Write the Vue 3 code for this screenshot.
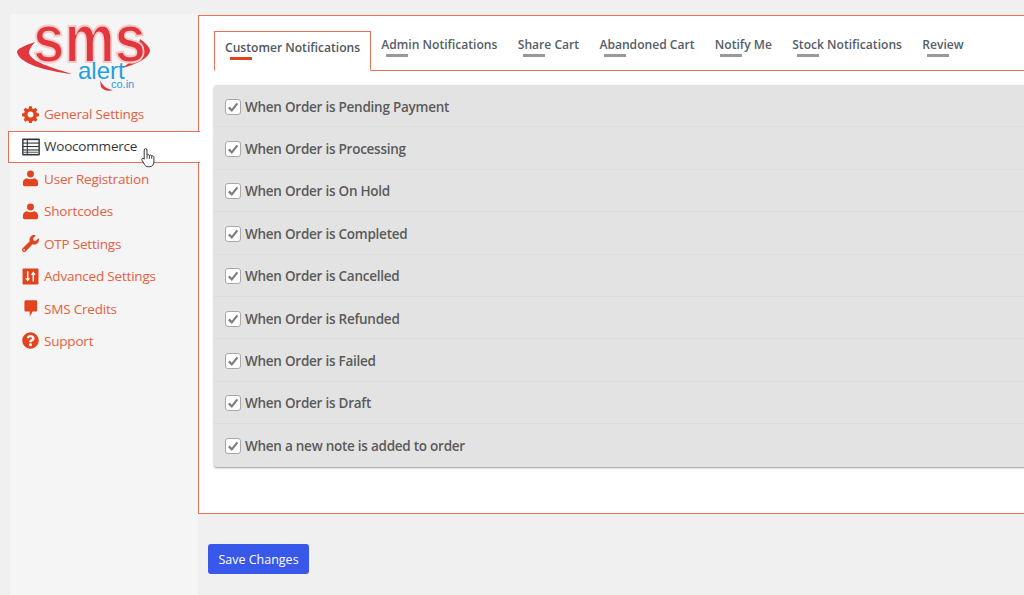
<template>
  <div class="page">
    <aside class="sidebar">
      <div class="logo">
        <svg width="160" height="76" viewBox="0 0 160 76">
          <path d="M18 24C6 28 0 31 0 34c2 12 30 19 55 22-19-6-41-12-43-21 0-3 2-7 6-11z" fill="#e0383e" />
          <path d="M123 21c7 5 10 9 10 12-1 7-13 13-28 17 9-6 17-12 17-18 0-4 0-8 1-11z" fill="#e0383e" />
          <text x="16" y="44" textLength="113" lengthAdjust="spacingAndGlyphs" class="logo-sms">sms</text>
          <text x="61" y="61" class="logo-alert">alert</text>
          <text x="94" y="70" class="logo-co">co.in</text>
          <path d="M83 62c2 5 6 9 13 10-5 2-10 0-12-3z" fill="#e0383e" />
        </svg>
      </div>
      <nav class="menu">
        <a v-for="item in menu" :key="item.label" class="menu-item" :class="{ active: item.active }">
          <svg class="menu-icon" viewBox="0 0 512 512" v-html="item.icon"></svg>
          {{ item.label }}
          <svg v-if="item.active" class="hand" width="14" height="21" viewBox="0 0 14 21">
            <path d="M4.600 1.600c.9 0 1.400.6 1.400 1.400v5.200c.5-.8 2-.8 2.400.2.7-.7 2-.5 2.300.5 1-.4 2.200.1 2.200 1.400v4.600c0 2.700-1.600 4.800-4.300 4.800H7.300c-1.800 0-2.800-.7-3.700-2.100L1 13.300c-.9-1.500.8-2.700 1.900-1.500l.3.400V3c0-.8.500-1.400 1.400-1.400z" fill="#fff" stroke="#333" stroke-width="1" />
            <path d="M6 8.200v3.600M8.400 8.400v3.400M10.700 8.900v2.900" stroke="#333" stroke-width=".9" fill="none" />
          </svg>
        </a>
      </nav>
    </aside>

    <main class="main">
      <section class="panel">
        <div class="tabs">
          <a v-for="tab in tabs" :key="tab" class="tab" :class="{ current: tab === 'Customer Notifications' }">
            {{ tab }}
            <span class="tab-bar"></span>
          </a>
        </div>
        <div class="rows">
          <label v-for="row in rows" :key="row" class="row">
            <span class="check">
              <svg width="12" height="12" viewBox="0 0 12 12">
                <path d="M1.800 6.400l3 3 5.600-7" fill="none" stroke="#7a7f84" stroke-width="2.200" />
              </svg>
            </span>
            {{ row }}
          </label>
        </div>
      </section>
      <button class="save">Save Changes</button>
    </main>
  </div>
</template>

<script setup>
const userIcon = '<g fill="#e2441f"><circle cx="256" cy="120" r="104"/><path d="M150 250c30 34 182 34 212 0 76 10 122 60 122 130v60c0 30-20 50-50 50H78c-30 0-50-20-50-50v-60c0-70 46-120 122-130z"/></g>'

const menu = [
  {
    label: 'General Settings',
    icon: '<path fill="#e2441f" d="M216 10h80l12 64 46 19 54-37 57 57-37 54 19 46 65 12v80l-65 12-19 46 37 54-57 57-54-37-46 19-12 65h-80l-12-65-46-19-54 37-57-57 37-54-19-46-65-12v-80l65-12 19-46-37-54 57-57 54 37 46-19z"/><circle cx="256" cy="256" r="88" fill="#f5f5f5"/>'
  },
  {
    label: 'Woocommerce',
    active: true,
    icon: '<rect x="4" y="16" width="504" height="480" rx="24" fill="#32373c"/><g fill="#fff"><rect x="44" y="62" width="424" height="66"/><rect x="44" y="160" width="424" height="66"/><rect x="44" y="258" width="424" height="66"/><rect x="44" y="356" width="424" height="96"/></g><g fill="#32373c"><rect x="136" y="62" width="30" height="390"/><rect x="44" y="392" width="424" height="24"/></g>'
  },
  { label: 'User Registration', icon: userIcon },
  { label: 'Shortcodes', icon: userIcon },
  {
    label: 'OTP Settings',
    icon: '<path fill="#e2441f" d="M507.730 109.100c-2.240-9.030-13.540-12.090-20.120-5.510l-74.360 74.360-67.880-11.310-11.310-67.880 74.360-74.360c6.620-6.620 3.430-17.900-5.660-20.160-47.380-11.740-99.550.91-136.580 37.930-39.640 39.640-50.550 97.100-34.050 147.200L18.740 402.760c-24.990 24.990-24.990 65.510 0 90.500 24.990 24.990 65.510 24.990 90.500 0l213.210-213.210c50.120 16.710 107.470 5.680 147.370-34.220 37.070-37.070 49.700-89.320 37.910-136.730zM64 472c-13.250 0-24-10.750-24-24 0-13.260 10.750-24 24-24s24 10.740 24 24c0 13.250-10.750 24-24 24z"/>'
  },
  {
    label: 'Advanced Settings',
    icon: '<rect x="16" y="16" width="480" height="480" rx="30" fill="#e2441f"/><path d="M150 100h44v210h50l-72 100-72-100h50zM318 410h44V200h50l-72-100-72 100h50z" fill="#fff"/>'
  },
  {
    label: 'SMS Credits',
    icon: '<path fill="#e2441f" d="M70 10h372c34 0 54 18 54 50v240c0 32-20 50-54 50H330L216 500V350H70c-34 0-54-18-54-50V60c0-32 20-50 54-50z" transform="translate(60 0) scale(.8 1)"/>'
  },
  {
    label: 'Support',
    icon: '<path fill="#e2441f" d="M504 256c0 136.997-111.043 248-248 248S8 392.997 8 256C8 119.083 119.043 8 256 8s248 111.083 248 248zM262.655 90c-54.497 0-89.255 22.957-116.549 63.758-3.536 5.286-2.353 12.415 2.715 16.258l34.699 26.310c5.205 3.947 12.621 3.008 16.665-2.122 17.864-22.658 30.113-35.797 57.303-35.797 20.429 0 45.698 13.148 45.698 32.958 0 14.976-12.363 22.667-32.534 33.976C247.128 238.528 216 254.941 216 296v4c0 6.627 5.373 12 12 12h56c6.627 0 12-5.373 12-12v-1.333c0-28.462 83.186-29.647 83.186-106.667 0-58.002-60.165-102-116.531-102zM256 338c-25.365 0-46 20.635-46 46 0 25.364 20.635 46 46 46s46-20.636 46-46c0-25.365-20.635-46-46-46z"/>'
  }
]

const tabs = [
  'Customer Notifications',
  'Admin Notifications',
  'Share Cart',
  'Abandoned Cart',
  'Notify Me',
  'Stock Notifications',
  'Review'
]

const rows = [
  'When Order is Pending Payment',
  'When Order is Processing',
  'When Order is On Hold',
  'When Order is Completed',
  'When Order is Cancelled',
  'When Order is Refunded',
  'When Order is Failed',
  'When Order is Draft',
  'When a new note is added to order'
]
</script>

<style>
html,
body {
  background: #f0f0f1;
  overflow: hidden;
}
</style>

<style scoped>
.page {
  display: flex;
  width: 1024px;
  height: 595px;
  overflow: hidden;
  padding-left: 10px;
  box-sizing: border-box;
  background: #f0f0f1;
  font-family: "Open Sans", "Noto Sans", sans-serif;
}

.sidebar {
  width: 188px;
  flex: none;
  margin-top: 14px;
  background: #f5f5f5;
}

.logo {
  height: 84px;
  padding: 4px 0 0 7px;
  box-sizing: border-box;
}

.logo svg {
  display: block;
}

.logo-sms {
  font: 700 68px "Liberation Sans", sans-serif;
  fill: #e0383e;
  stroke: #f6c8c8;
  stroke-width: 2;
}

.logo-alert {
  font: 400 24px "Liberation Sans", sans-serif;
  fill: #1f9fe0;
}

.logo-co {
  font: 400 11px "Liberation Sans", sans-serif;
  fill: #1f9fe0;
}

.menu {
  display: flex;
  flex-direction: column;
}

.menu-item {
  position: relative;
  display: flex;
  align-items: center;
  gap: 5px;
  height: 32.4px;
  padding-left: 12px;
  font-size: 13.5px;
  letter-spacing: -0.2px;
  color: #e5603f;
  box-sizing: border-box;
}

.menu-item.active {
  margin: 1px -2px 0 -2px;
  height: 31.4px;
  padding: 0 0 2px 13px;
  background: #fff;
  color: #32373c;
  border: 1px solid #e2705a;
  border-right: 0;
  z-index: 1;
}

.menu-icon {
  width: 17px;
  height: 17px;
  flex: none;
}

.active .menu-icon {
  width: 18px;
  height: 18px;
  margin: 2px -1px 0 0;
}

.hand {
  position: absolute;
  left: 132px;
  top: 15px;
}

.main {
  flex: none;
  width: 900px;
}

.panel {
  margin-top: 15px;
  height: 499px;
  box-sizing: border-box;
  padding: 15px 15px 0;
  background: #fff;
  border: 1px solid #e8735a;
}

.tabs {
  display: flex;
  height: 40px;
  box-sizing: border-box;
  border-bottom: 1px solid #e8735a;
}

.tab {
  height: 32px;
  padding: 6px 10.15px 0;
  font-size: 12.1px;
  font-weight: 600;
  line-height: 16px;
  color: #555d66;
}

.tab.current {
  height: 40px;
  padding: 8px 10px 0;
  background: #fff;
  border: 1px solid #e8735a;
  border-bottom: 1px solid #fff;
  box-sizing: border-box;
  color: #50575e;
}

.tab-bar {
  display: block;
  width: 22px;
  height: 3px;
  margin: 1px 0 0 5px;
  background: #999;
}

.current .tab-bar {
  background: #e2441f;
}

.rows {
  margin-top: 14px;
  background: #e3e3e3;
  border-radius: 3px;
  box-shadow: 0 1px 2px #999;
}

.row {
  display: flex;
  align-items: center;
  gap: 4px;
  height: 42.4px;
  box-sizing: border-box;
  padding: 2px 0 0 11px;
  font-size: 13.5px;
  letter-spacing: -0.25px;
  font-weight: 600;
  color: #5a5a5a;
  border-bottom: 1px solid #dcdcdc;
}

.row:last-child {
  border-bottom: 0;
}

.check {
  display: flex;
  align-items: center;
  justify-content: center;
  width: 16px;
  height: 16px;
  box-sizing: border-box;
  background: #fff;
  border: 1px solid #a8a8a8;
  border-radius: 3px;
}

.save {
  display: block;
  margin: 30px 0 0 10px;
  width: 101px;
  height: 30px;
  padding: 0;
  border: 0;
  border-radius: 3px;
  background: #3858e9;
  color: #fff;
  font-family: inherit;
  font-size: 12.5px;
}
</style>
